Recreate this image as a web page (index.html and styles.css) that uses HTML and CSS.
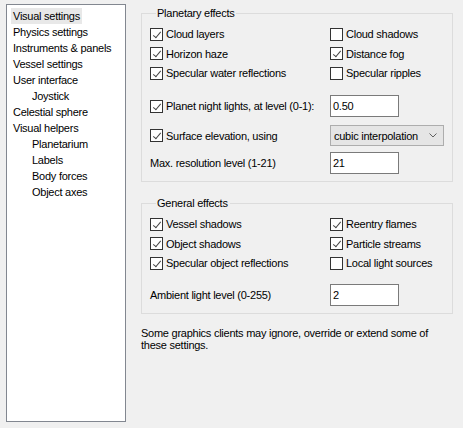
FILE: index.html
```html
<!DOCTYPE html>
<html>
<head>
<meta charset="utf-8">
<link rel="stylesheet" href="styles.css">
</head>
<body>
<div class="window">
  <div class="tree">
    <div class="item"><span class="label selected">Visual settings</span></div>
    <div class="item"><span class="label">Physics settings</span></div>
    <div class="item"><span class="label">Instruments &amp; panels</span></div>
    <div class="item"><span class="label">Vessel settings</span></div>
    <div class="item"><span class="label">User interface</span></div>
    <div class="item sub"><span class="label">Joystick</span></div>
    <div class="item"><span class="label">Celestial sphere</span></div>
    <div class="item"><span class="label">Visual helpers</span></div>
    <div class="item sub"><span class="label">Planetarium</span></div>
    <div class="item sub"><span class="label">Labels</span></div>
    <div class="item sub"><span class="label">Body forces</span></div>
    <div class="item sub"><span class="label">Object axes</span></div>
  </div>

  <div class="panel">
    <fieldset class="group group-planet">
      <legend>Planetary effects</legend>
      <div class="checks">
        <div class="check"><span class="box on"></span>Cloud layers</div>
        <div class="check"><span class="box"></span>Cloud shadows</div>
        <div class="check"><span class="box on"></span>Horizon haze</div>
        <div class="check"><span class="box on"></span>Distance fog</div>
        <div class="check"><span class="box on"></span>Specular water reflections</div>
        <div class="check"><span class="box"></span>Specular ripples</div>
      </div>
      <div class="row row-night">
        <div class="check"><span class="box on"></span>Planet night lights, at level (0-1):</div>
        <div class="input">0.50</div>
      </div>
      <div class="row row-surface">
        <div class="check"><span class="box on"></span>Surface elevation, using</div>
        <div class="combo"><span>cubic interpolation</span>
          <svg class="chev" width="8" height="5" viewBox="0 0 8 5"><polyline points="0.5,0.5 4,4 7.5,0.5" fill="none" stroke="#606060" stroke-width="1"/></svg>
        </div>
      </div>
      <div class="row row-res">
        <div class="text">Max. resolution level (1-21)</div>
        <div class="input">21</div>
      </div>
    </fieldset>

    <fieldset class="group group-general">
      <legend>General effects</legend>
      <div class="checks">
        <div class="check"><span class="box on"></span>Vessel shadows</div>
        <div class="check"><span class="box on"></span>Reentry flames</div>
        <div class="check"><span class="box on"></span>Object shadows</div>
        <div class="check"><span class="box on"></span>Particle streams</div>
        <div class="check"><span class="box on"></span>Specular object reflections</div>
        <div class="check"><span class="box"></span>Local light sources</div>
      </div>
      <div class="row row-ambient">
        <div class="text">Ambient light level (0-255)</div>
        <div class="input">2</div>
      </div>
    </fieldset>

    <p class="note">Some graphics clients may ignore, override or extend some of these settings.</p>
  </div>
</div>
</body>
</html>
```

FILE: styles.css
```css
html, body {
  margin: 0;
  padding: 0;
  background: #f0f0f0;
}
body {
  font-family: "Liberation Sans", Arial, sans-serif;
  font-size: 11px;
  letter-spacing: -0.25px;
  color: #000;
  width: 463px;
  height: 428px;
  overflow: hidden;
}
.window {
  display: flex;
  align-items: flex-start;
}
.tree {
  box-sizing: border-box;
  margin: 4px 0 0 6px;
  width: 120px;
  height: 418px;
  background: #fff;
  border: 1px solid #828790;
  padding-top: 3px;
}
.item {
  height: 16px;
  line-height: 16px;
  padding-left: 4px;
}
.item.sub {
  padding-left: 23px;
}
.label {
  display: inline-block;
  padding: 0 2px;
  height: 16px;
}
.label.selected {
  background: #e8e8e8;
}
.panel {
  margin-left: 15px;
  width: 312px;
}
.group {
  box-sizing: border-box;
  width: 312px;
  margin: 7px 0 0 0;
  border: 1px solid #dcdcdc;
  padding: 4.5px 0 7px 8px;
  min-inline-size: 0;
}
.group-general {
  margin-top: 15px;
}
.group legend {
  line-height: 13px;
  padding: 0 2px 0 1px;
  margin-left: 6px;
}
.checks {
  display: grid;
  grid-template-columns: 180px auto;
  grid-auto-rows: 19.5px;
  align-items: center;
}
.check {
  display: flex;
  align-items: center;
  white-space: nowrap;
}
.box {
  box-sizing: border-box;
  width: 13px;
  height: 13px;
  border: 1px solid #333;
  background: #fff;
  margin-right: 3px;
  flex: none;
  position: relative;
}
.box.on::after {
  content: "";
  position: absolute;
  width: 3px;
  height: 7px;
  border-right: 1px solid #444;
  border-bottom: 1px solid #444;
  transform: rotate(40deg);
  transform-origin: center;
  left: 4px;
  top: 1px;
}
.row {
  display: grid;
  grid-template-columns: 180px auto;
  align-items: center;
}
.row-night { margin-top: 12px; }
.row-surface { margin-top: 8px; }
.row-res { margin-top: 6px; }
.row-ambient { margin-top: 11px; }
.input {
  box-sizing: border-box;
  width: 69px;
  height: 22px;
  border: 1px solid #7a7a7a;
  background: #fff;
  padding: 0 2px;
  line-height: 20px;
}
.combo {
  box-sizing: border-box;
  width: 114px;
  height: 21px;
  border: 1px solid #adadad;
  background: #e5e5e5;
  display: flex;
  align-items: center;
  justify-content: space-between;
  padding: 0 6px 0 3px;
  white-space: nowrap;
}
.chev {
  display: block;
}
.note {
  margin: 13px 0 0 0;
  line-height: 12px;
}
```
